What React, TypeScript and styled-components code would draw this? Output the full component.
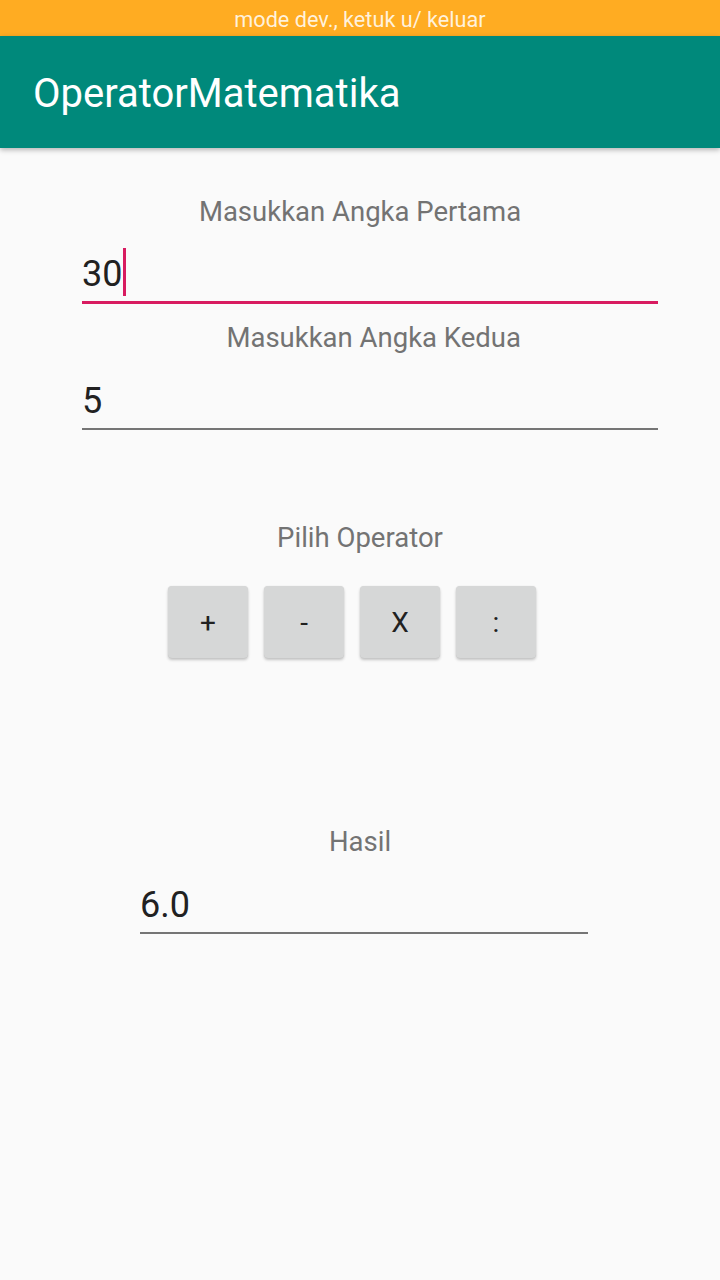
import React from "react";
import styled, { createGlobalStyle } from "styled-components";

const Global = createGlobalStyle`
  html, body { margin: 0; padding: 0; background: #fafafa; }
  body { font-family: Roboto, "Noto Sans", "Liberation Sans", sans-serif; }
  * { box-sizing: border-box; }
`;

const Screen = styled.div`
  width: 720px;
  height: 1280px;
  background: #fafafa;
  display: flex;
  flex-direction: column;
  overflow: hidden;
`;

const StatusBar = styled.div`
  height: 36px;
  background: #ffac22;
  color: rgba(255, 255, 255, 0.85);
  font-size: 21.7px;
  line-height: 33px;
  padding-top: 3px;
  text-align: center;
`;

const AppBar = styled.header`
  height: 112px;
  background: #00897b;
  display: flex;
  align-items: center;
  padding: 4px 0 0 33px;
  box-shadow: 0 2px 5px rgba(0, 0, 0, 0.28);
  position: relative;
  z-index: 1;
`;

const Title = styled.h1`
  margin: 0;
  font-size: 40px;
  line-height: 48px;
  font-weight: 400;
  color: #ffffff;
`;

const Content = styled.main`
  display: flex;
  flex-direction: column;
  padding-top: 48px;
`;

const Label = styled.div<{ $end?: boolean; $mt: number }>`
  margin-top: ${(p) => p.$mt}px;
  font-size: 27.5px;
  line-height: 32px;
  color: #737373;
  display: flex;
  justify-content: ${(p) => (p.$end ? "flex-end" : "center")};
  padding-right: ${(p) => (p.$end ? "199px" : "0")};
`;

const Field = styled.div<{ $focused?: boolean; $left: number; $width: number; $mt: number }>`
  margin-top: ${(p) => p.$mt}px;
  margin-left: ${(p) => p.$left}px;
  width: ${(p) => p.$width}px;
  height: 48px;
  box-sizing: content-box;
  padding-bottom: 3px;
  border-bottom: ${(p) => (p.$focused ? "3px solid #d81b60" : "2px solid #757575")};
  font-size: 36px;
  line-height: 48px;
  color: #212121;
  display: flex;
  align-items: center;
`;

const Caret = styled.span`
  display: inline-block;
  width: 3px;
  height: 48px;
  background: #d81b60;
  margin-left: 1px;
  transform: translateY(-2px);
`;

const ButtonRow = styled.div`
  display: flex;
  gap: 16px;
  padding-left: 168px;
  margin-top: 32px;
`;

const OpButton = styled.button`
  width: 80px;
  height: 72px;
  border: none;
  border-radius: 4px;
  background: #d6d7d7;
  color: #212121;
  font-family: Roboto, "Noto Sans", "Liberation Sans", sans-serif;
  font-size: 28px;
  padding: 0;
  box-shadow: 0 2px 3px rgba(0, 0, 0, 0.22), 0 0 1px rgba(0, 0, 0, 0.12);
  display: flex;
  align-items: center;
  justify-content: center;
`;

export default function App() {
  return (
    <>
      <Global />
      <Screen>
        <StatusBar>mode dev., ketuk u/ keluar</StatusBar>
        <AppBar>
          <Title>OperatorMatematika</Title>
        </AppBar>
        <Content>
          <Label $mt={0}>Masukkan Angka Pertama</Label>
          <Field $focused $left={82} $width={576} $mt={22}>
            30<Caret />
          </Field>
          <Label $end $mt={18}>Masukkan Angka Kedua</Label>
          <Field $left={82} $width={576} $mt={23}>5</Field>
          <Label $mt={92}>Pilih Operator</Label>
          <ButtonRow>
            <OpButton>+</OpButton>
            <OpButton>-</OpButton>
            <OpButton>X</OpButton>
            <OpButton>:</OpButton>
          </ButtonRow>
          <Label $mt={168}>Hasil</Label>
          <Field $left={140} $width={448} $mt={23}>6.0</Field>
        </Content>
      </Screen>
    </>
  );
}
